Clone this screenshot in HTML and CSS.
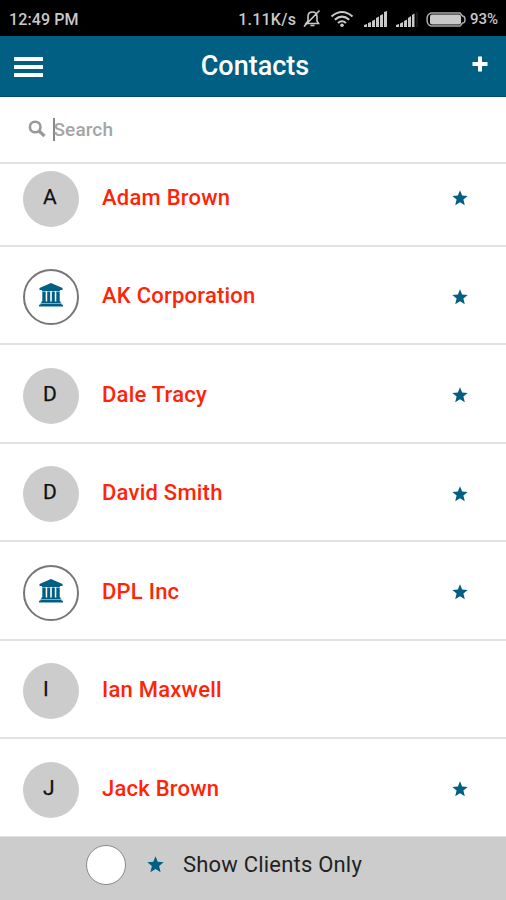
FILE: index.html
```html
<!DOCTYPE html>
<html lang="en">
<head>
<meta charset="utf-8">
<title>Contacts</title>
<link rel="stylesheet" href="styles.css">
</head>
<body>
<svg class="defs" width="0" height="0" aria-hidden="true">
  <symbol id="star" viewBox="0 0 16 16"><path d="M8 .3l2.100 5.200 5.600.4-4.300 3.600 1.400 5.700L8 12.200l-4.800 3 1.400-5.700L.3 5.900l5.600-.4z"/></symbol>
  <symbol id="bank" viewBox="0 0 24 24"><path d="M12 0L23.500 5v2H21v1H3V7H.5V5zM3.300 8.500h3.400v10h1.500v-10h3v10h1.600v-10h3v10h1.500v-10h3.400v10h1v1.500H2.300v-1.500h1zM1.400 20.500h21.200v1.200H24v1.900H0v-1.900h1.400z"/></symbol>
</svg>
<div class="screen">
  <div class="status">
    <span class="time">12:49 PM</span>
    <span class="speed">1.11K/s</span>
    <svg class="bell" width="18" height="20" viewBox="0 0 18 20"><path d="M3 14.500h12.500L14 12V7.500C14 4.500 12 3 9.500 3S5 4.500 5 7.500V12zM7.500 16.500h4M1 17.500L16.500 1.500"/></svg>
    <svg class="wifi" width="24" height="18" viewBox="0 0 24 18"><path d="M1.500 6.500Q12-2.500 22.500 6.500M4.800 9.800Q12 3.500 19.200 9.800M8 13Q12 9.500 16 13"/><circle cx="12" cy="15.300" r="1.800"/></svg>
    <svg class="signal" width="23" height="16" viewBox="0 0 23 16"><path d="M0 16v-2l3-1v3zM4 16v-4l3-1v5zM8 16v-6l3-1.500V16zM12 16V7l3-1.500V16zM16 16V4.500L19 3v13zM20 16V1l3-1v16z"/></svg>
    <svg class="signal second" width="22" height="16" viewBox="0 0 22 16"><path d="M0 16v-2l3-1v3zM4 16v-3.500l3-1.500v5zM8 16v-6l3-1.500V16zM12 16V7l3-2v11zM16 16V4l2.500-1.500V16z"/><path class="dim" d="M20.500 1h1v15h-1z"/></svg>
    <svg class="battery" width="40" height="15" viewBox="0 0 40 15"><path class="shell" d="M5 1h29l2.500 3q2.500 0 2.500 3.500T36.500 11L34 14H5Q1 13 1 7.500T5 1z"/><rect x="4" y="2.500" width="31" height="10" rx="2"/></svg>
    <span class="percent">93%</span>
  </div>
  <header class="bar">
    <div class="menu"><i></i><i></i><i></i></div>
    <h1>Contacts</h1>
    <svg class="add" width="16" height="16" viewBox="0 0 16 16"><path d="M6 .5h4V6h5.500v4H10v5.500H6V10H.5V6H6z"/></svg>
  </header>
  <div class="search">
    <svg width="18" height="18" viewBox="0 0 18 18"><circle cx="7.200" cy="7" r="5.300"/><path d="M11 11l5.500 5"/></svg>
    <i class="caret"></i><span>Search</span>
  </div>
  <main class="list">
    <div class="row"><span class="avatar">A</span><span class="name">Adam Brown</span><svg class="star"><use href="#star"/></svg></div>
    <div class="row"><span class="avatar company"><svg class="bank"><use href="#bank"/></svg></span><span class="name">AK Corporation</span><svg class="star"><use href="#star"/></svg></div>
    <div class="row"><span class="avatar">D</span><span class="name">Dale Tracy</span><svg class="star"><use href="#star"/></svg></div>
    <div class="row"><span class="avatar">D</span><span class="name">David Smith</span><svg class="star"><use href="#star"/></svg></div>
    <div class="row"><span class="avatar company"><svg class="bank"><use href="#bank"/></svg></span><span class="name">DPL Inc</span><svg class="star"><use href="#star"/></svg></div>
    <div class="row"><span class="avatar">I</span><span class="name">Ian Maxwell</span></div>
    <div class="row"><span class="avatar">J</span><span class="name">Jack Brown</span><svg class="star"><use href="#star"/></svg></div>
  </main>
  <footer class="filter">
    <span class="toggle"></span>
    <svg class="star"><use href="#star"/></svg>
    <span class="label">Show Clients Only</span>
  </footer>
</div>
</body>
</html>
```
FILE: styles.css
```css
* { box-sizing: border-box; }
body { margin: 0; font-family: Roboto, "Liberation Sans", sans-serif; background: #fff; }
.defs { position: absolute; }
.screen { display: flex; flex-direction: column; width: 506px; height: 900px; overflow: hidden; }
svg { flex: none; }

.status { display: flex; align-items: center; height: 36px; flex: none; padding: 2px 8px 0 9px; background: #000; color: #c9c9c9; font-size: 16px; font-weight: 500; white-space: nowrap; }
.time { width: 230px; letter-spacing: .1px; }
.speed { width: 65px; letter-spacing: .25px; }
.status svg { fill: #c9c9c9; }
.status .bell { fill: none; stroke: #c9c9c9; stroke-width: 1.6; }
.wifi { margin-left: 9px; }
.status .wifi path { fill: none; stroke: #c9c9c9; stroke-width: 2.1; }
.signal { margin-left: 10px; }
.signal.second { margin-left: 9px; }
.status .signal .dim { fill: #333; }
.battery { margin-left: 8px; }
.status .battery .shell { fill: none; stroke: #aaa; stroke-width: 1.5; }
.percent { margin-left: 4px; font-size: 15px; }

.bar { display: flex; align-items: center; height: 61px; flex: none; padding: 0 18px 0 14px; background: #005f83; border-bottom: 1px solid #004c78; color: #fff; }
.menu { display: flex; flex-direction: column; gap: 4px; width: 29px; margin-top: 1px; }
.menu i { height: 4px; background: #fff; }
.bar h1 { flex: 1; margin: 0 0 0 -5px; font-size: 27px; line-height: 32px; font-weight: 500; text-align: center; }
.add { fill: #fff; margin-top: -4px; }

.search { display: flex; align-items: center; height: 67px; flex: none; padding: 0 28px; border-bottom: 2px solid #e2e2e2; color: #a5a5a5; font-size: 19px; }
.search svg { fill: none; stroke: #999; stroke-width: 2.6; margin-top: -1px; }
.search svg path { stroke-width: 3.2; }
.caret { width: 1.5px; height: 23px; margin-left: 7px; background: #888; }
.search span { margin-left: -1px; letter-spacing: .1px; font-weight: 500; }

.list { flex: none; display: flex; flex-direction: column; height: 673px; overflow: hidden; }
.row { display: flex; align-items: flex-end; flex: none; height: 98.5px; padding: 0 38px 18px 23px; border-bottom: 2px solid #e2e2e2; }
.row:first-child { height: 82.5px; }
.avatar { display: flex; align-items: center; width: 56px; height: 56px; padding: 0 0 4px 20px; border-radius: 50%; background: #ccc; color: #111; font-size: 21px; font-weight: 400; -webkit-text-stroke: .25px #111; }
.avatar.company { padding: 0 0 4px; justify-content: center; background: #fff; border: 2.5px solid #777; }
.bank { width: 24px; height: 24px; fill: #005f83; }
.name { flex: 1; margin: 0 0 16px 23px; color: #ff2408; font-size: 22px; line-height: 26px; font-weight: 500; letter-spacing: .23px; }
.star { width: 16px; height: 16px; fill: #005f83; }
.row .star { margin: 0 0 20.5px; }

.filter { display: flex; align-items: center; flex: 1; padding: 0 0 8px 86px; background: #ccc; color: #222; font-size: 22px; }
.toggle { width: 40px; height: 40px; border: 1px solid #888; border-radius: 50%; background: #fff; }
.filter .star { width: 17px; height: 17px; margin: 0 19px 0 21px; }
.label { letter-spacing: .2px; }
```
